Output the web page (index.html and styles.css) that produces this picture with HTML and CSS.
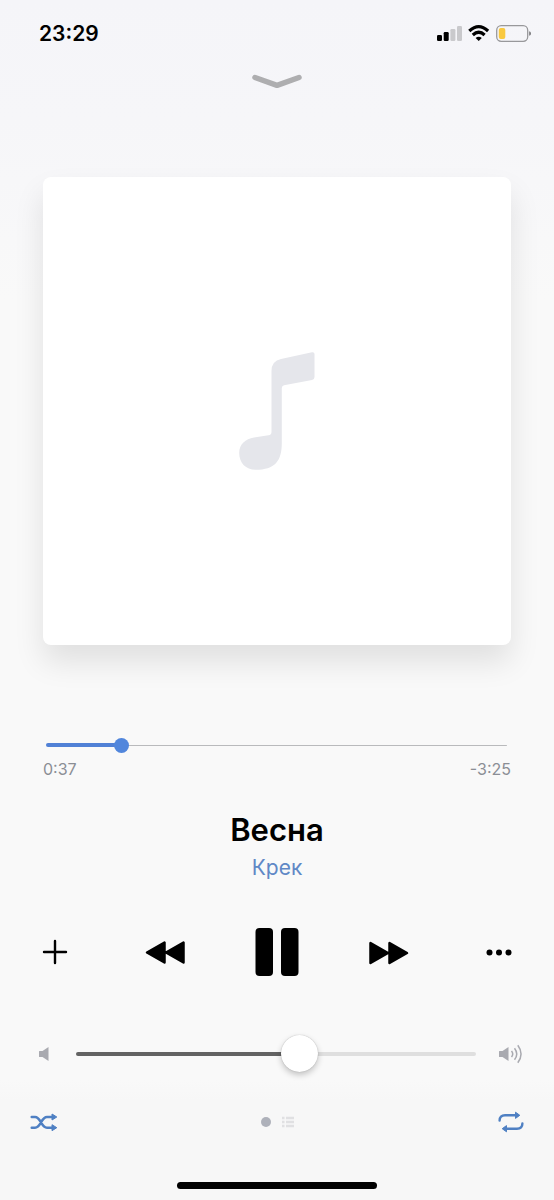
FILE: index.html
```html
<!DOCTYPE html>
<html lang="ru">
<head>
<meta charset="utf-8">
<meta name="viewport" content="width=device-width, initial-scale=1">
<title>Весна — Крек</title>
<link rel="stylesheet" href="styles.css">
</head>
<body>
<main class="player">
  <header class="status">
    <time class="clock">23:29</time>
    <svg class="status-icons" width="96" height="20" viewBox="0 0 96 20" aria-hidden="true">
      <rect x="1" y="12" width="5" height="6" rx="1.2"/>
      <rect x="7.700" y="9" width="5" height="9" rx="1.200"/>
      <rect x="14.400" y="6" width="5" height="12" rx="1.200" fill="#c9c9cc"/>
      <rect x="21" y="3" width="5" height="15" rx="1.200" fill="#c9c9cc"/>
      <g fill="none" stroke="#000" stroke-width="3.200">
        <path d="M33.300 8Q42.700 -.8 52.100 8"/>
        <path d="M36.800 12Q42.700 6.500 48.600 12"/>
      </g>
      <path d="M39.600 15Q42.700 12.500 45.800 15L42.700 18Z"/>
      <rect x="60.700" y="2.700" width="31" height="15.600" rx="4.500" fill="none" stroke="#98989b" stroke-width="1.300"/>
      <rect x="62.800" y="4.900" width="6.500" height="11.200" rx="2" fill="#f9c940"/>
      <path d="M93.200 8.200Q95 8.700 95 10.500T93.200 12.800Z" fill="#77777a"/>
    </svg>
  </header>

  <button class="collapse" type="button" aria-label="Свернуть">
    <svg width="52" height="18" viewBox="0 0 52 18"><path d="M4 5.500L26 13.300L48 5.500" fill="none" stroke="#aeaeb0" stroke-width="5.500" stroke-linecap="round" stroke-linejoin="round"/></svg>
  </button>

  <div class="cover">
    <svg width="78" height="120" viewBox="0 0 78 120" aria-hidden="true">
      <path d="M33.500 20Q33.500 10 43 8L74 1.200Q76.500.8 76.500 3V26Q76.500 28.500 74 29L46 34.200Q43.800 34.600 43.800 37V92C43.800 110 37 118.800 17.500 118.800C8 118.800 1.200 112 1.200 102C1.200 93 7.500 88 16 86.500L30.500 84.300Q33.500 84 33.500 81Z" fill="#e5e6eb"/>
    </svg>
  </div>

  <section class="progress" aria-label="Воспроизведение">
    <input class="seek" type="range" min="0" max="242" value="37" aria-label="Позиция" style="--fill: 16%">
    <div class="times"><span>0:37</span><span>-3:25</span></div>
  </section>

  <section class="track">
    <h1 class="title">Весна</h1>
    <a class="artist" href="#">Крек</a>
  </section>

  <nav class="controls" aria-label="Управление">
    <button class="icon-button" type="button" aria-label="Добавить">
      <svg width="26" height="26" viewBox="0 0 26 26"><path d="M13 2V24M2 13H24" stroke="#000" stroke-width="2.400" stroke-linecap="round"/></svg>
    </button>
    <button class="icon-button" type="button" aria-label="Предыдущая">
      <svg width="42" height="26" viewBox="0 0 42 26"><path d="M2 13.500L19.500 3.500V23.500ZM21 13.500L38.500 3.500V23.500Z" stroke="#000" stroke-width="2.500" stroke-linejoin="round"/></svg>
    </button>
    <button class="icon-button" type="button" aria-label="Пауза">
      <svg width="44" height="50" viewBox="0 0 44 50"><rect x=".5" y="1" width="17.500" height="48" rx="4"/><rect x="26" y="1" width="17.500" height="48" rx="4"/></svg>
    </button>
    <button class="icon-button" type="button" aria-label="Следующая">
      <svg width="42" height="26" viewBox="0 0 42 26"><path d="M40 14L22.500 4V24ZM21 14L3.500 4V24Z" stroke="#000" stroke-width="2.500" stroke-linejoin="round"/></svg>
    </button>
    <button class="icon-button" type="button" aria-label="Ещё">
      <svg width="28" height="26" viewBox="0 0 28 26"><circle cx="4.500" cy="13.500" r="3"/><circle cx="14" cy="13.500" r="3"/><circle cx="23.500" cy="13.500" r="3"/></svg>
    </button>
  </nav>

  <section class="volume" aria-label="Громкость">
    <svg width="24" height="24" viewBox="0 0 24 24" fill="#a9aab0" aria-hidden="true"><path d="M8.500 9H11.500L17.500 5V19L11.500 15H8.500Q8 15 8 14.500V9.500Q8 9 8.500 9Z"/></svg>
    <input class="level" type="range" min="0" max="1000" value="565" aria-label="Громкость" style="--fill: 56%">
    <svg class="loud" width="24" height="24" viewBox="0 0 24 24" aria-hidden="true">
      <path d="M1.500 9H4.500L10.500 5V19L4.500 15H1.500Q1 15 1 14.500V9.500Q1 9 1.500 9Z" fill="#a9aab0"/>
      <path d="M13.500 9Q16 12 13.500 15M16.500 6.200Q21 12 16.500 17.800M19.800 3.300Q26.300 12 19.800 20.700" fill="none" stroke="#a9aab0" stroke-width="1.500"/>
    </svg>
  </section>

  <footer class="footer">
    <button class="icon-button" type="button" aria-label="Перемешать">
      <svg width="28" height="20" viewBox="0 0 28 20">
        <path d="M1.700 5H5C11 5 11 15.700 17 15.700H23M1.700 15.700H5C11 15.700 11 5 17 5H23" fill="none" stroke="#4f80c3" stroke-width="2.500" stroke-linecap="round"/>
        <path d="M22 2L26.800 5L22 8ZM22 12.700L26.800 15.700L22 18.700Z" fill="#4f80c3" stroke="#4f80c3" stroke-linejoin="round"/>
      </svg>
    </button>
    <div class="pages" aria-hidden="true">
      <span class="page-dot"></span>
      <svg width="14" height="12" viewBox="0 0 14 12"><path d="M1 2H3.500M1 6H3.500M1 10H3.500M5 2H13M5 6H13M5 10H13" stroke="#e0e0e2" stroke-width="2.400"/></svg>
    </div>
    <button class="icon-button" type="button" aria-label="Повторять">
      <svg width="28" height="24" viewBox="0 0 28 24">
        <path d="M2.600 10.500Q2.600 5.300 8 5.300H20M25.400 13.500Q25.400 18.700 20 18.700H8" fill="none" stroke="#4f80c3" stroke-width="2.400" stroke-linecap="round"/>
        <path d="M18.500 2.200L22.800 5.300L18.500 8.400ZM9.500 15.600L5.200 18.700L9.500 21.800Z" fill="#4f80c3" stroke="#4f80c3" stroke-linejoin="round"/>
      </svg>
    </button>
  </footer>
  <div class="home-bar"></div>
</main>
</body>
</html>
```

FILE: styles.css
```css
* {
  box-sizing: border-box;
}

body {
  margin: 0;
  font-family: Inter, "Liberation Sans", sans-serif;
  background: #f9f9f9;
  color: #000;
}

svg {
  display: block;
  flex: none;
}

.player {
  display: flex;
  flex-direction: column;
  min-height: 100vh;
  padding-bottom: 11px;
  background: linear-gradient(#f5f5f9, #f6f6f9 120px, #f9f9f9 300px, #f9f9f9 1080px, #f7f7f7 1100px);
}

.status {
  display: flex;
  align-items: center;
  justify-content: space-between;
  height: 66px;
  padding: 0 22px 0 39px;
}

.clock {
  font-size: 21px;
  font-weight: 600;
}

.collapse,
.icon-button {
  display: flex;
  align-items: center;
  justify-content: center;
  padding: 0;
  border: 0;
  background: none;
  cursor: pointer;
}

.collapse {
  align-self: center;
  height: 30px;
}

.cover {
  display: flex;
  align-items: center;
  justify-content: center;
  aspect-ratio: 1;
  margin: 81px 43px 90px;
  border-radius: 8px;
  background: #fff;
  box-shadow: 0 17px 30px rgba(0, 0, 0, 0.1);
}

.progress {
  padding: 0 43px;
}

.seek,
.level {
  display: block;
  appearance: none;
  margin: 0;
  background: none;
}

.seek {
  width: calc(100% - 7px);
  height: 20px;
  margin-left: 3px;
}

.seek::-webkit-slider-runnable-track {
  height: 4px;
  border-radius: 2px;
  background:
    linear-gradient(#5181d6, #5181d6) left / var(--fill) 4px no-repeat,
    linear-gradient(#b9babc, #b9babc) center / 100% 1px no-repeat;
}

.seek::-webkit-slider-thumb {
  appearance: none;
  width: 15px;
  height: 15px;
  margin-top: -5px;
  border-radius: 50%;
  background: #5186dc;
}

.times {
  display: flex;
  justify-content: space-between;
  padding-top: 4px;
  font-size: 16px;
  line-height: 20px;
  color: #8b8e95;
}

.track {
  display: flex;
  flex-direction: column;
  align-items: center;
  padding-top: 31px;
}

.title {
  margin: 0;
  font-size: 31px;
  font-weight: 600;
  line-height: 40px;
}

.artist {
  font-size: 21px;
  line-height: 36px;
  color: #6088c6;
  text-decoration: none;
}

.controls {
  display: grid;
  grid-template-columns: repeat(5, 1fr);
  align-items: center;
  height: 50px;
  margin-top: 41px;
}

.volume {
  display: grid;
  grid-template-columns: 45px 1fr 46px;
  align-items: center;
  height: 40px;
  margin-top: 57px;
  padding: 0 32px 0 31px;
}

.loud {
  justify-self: end;
}

.level {
  width: 100%;
  height: 40px;
}

.level::-webkit-slider-runnable-track {
  height: 4px;
  border-radius: 2px;
  background: linear-gradient(to right, #636363 var(--fill), #dfdfdf var(--fill));
}

.level::-webkit-slider-thumb {
  appearance: none;
  width: 37px;
  height: 37px;
  margin-top: -17px;
  border-radius: 50%;
  background: #fff;
  box-shadow: 0 3px 6px rgba(0, 0, 0, 0.22), 0 0 1px rgba(0, 0, 0, 0.3);
}

.footer {
  display: flex;
  align-items: center;
  justify-content: space-between;
  height: 40px;
  margin-top: 28px;
  padding: 0 29px 0 30px;
}

.pages {
  display: flex;
  align-items: center;
  gap: 10px;
}

.page-dot {
  width: 10px;
  height: 10px;
  border-radius: 50%;
  background: #aeb1ba;
}

.home-bar {
  align-self: center;
  width: 36%;
  height: 7px;
  margin-top: auto;
  border-radius: 4px;
  background: #000;
}
```
